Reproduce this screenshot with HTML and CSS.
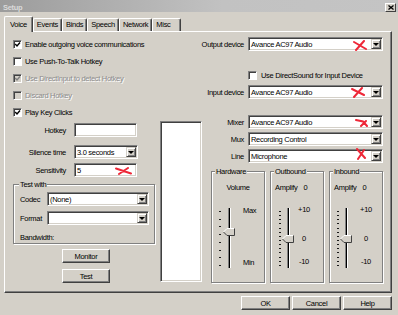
FILE: index.html
```html
<!DOCTYPE html>
<html lang="en">
<head>
    <meta charset="UTF-8">
    <meta name="viewport" content="width=device-width, initial-scale=1.0">
    <title>Setup</title>
    <link rel="stylesheet" href="styles.css">
</head>
<body>
<div class="window">
    <div class="titlebar">
        <span class="title">Setup</span>
        <span class="close"><svg width="6" height="5" viewBox="0 0 6 5"><path d="M0.5 0.5 L5.5 4.5 M5.5 0.5 L0.5 4.5" stroke="#000" stroke-width="1.3"/></svg></span>
    </div>

    <div class="tabs">
        <span class="tab tab-active">Voice</span>
        <span class="tab">Events</span>
        <span class="tab">Binds</span>
        <span class="tab">Speech</span>
        <span class="tab">Network</span>
        <span class="tab tab-last">Misc</span>
    </div>

    <div class="panel">
        <div class="col-left">
            <div class="checks">
                <div class="check"><span class="box"><svg width="7" height="7" viewBox="0 0 7 7"><polyline points="1.2,3 3,5 6,1.5"/></svg></span>Enable outgoing voice communications</div>
                <div class="check"><span class="box"></span>Use Push-To-Talk Hotkey</div>
                <div class="check check-off"><span class="box"><svg width="7" height="7" viewBox="0 0 7 7"><polyline points="1.2,3 3,5 6,1.5"/></svg></span>Use DirectInput to detect Hotkey</div>
                <div class="check check-off"><span class="box"></span>Discard Hotkey</div>
                <div class="check"><span class="box"><svg width="7" height="7" viewBox="0 0 7 7"><polyline points="1.2,3 3,5 6,1.5"/></svg></span>Play Key Clicks</div>
            </div>

            <div class="lower">
                <div class="form">
                    <div class="field field-first">
                        <span class="field-label">Hotkey</span>
                        <span class="input"></span>
                    </div>
                    <div class="field field-silence">
                        <span class="field-label">Silence time</span>
                        <span class="select select-short"><span>3.0 seconds</span><span class="drop"></span></span>
                    </div>
                    <div class="field">
                        <span class="field-label">Sensitivity</span>
                        <span class="input">5
                            <svg class="mark mark-sens" width="17" height="8" viewBox="0 0 17 8"><path d="M1 1.5 L16 6.5 M4 7 L13 1" stroke="#ee2838" stroke-width="2" stroke-linecap="round" fill="none"/></svg>
                        </span>
                    </div>

                    <div class="group group-test">
                        <div class="group-title">Test with</div>
                        <div class="test-row test-first">
                            <span class="test-label">Codec</span>
                            <span class="select select-wide"><span>(None)</span><span class="drop"></span></span>
                        </div>
                        <div class="test-row">
                            <span class="test-label">Format</span>
                            <span class="select select-wide"><span></span><span class="drop"></span></span>
                        </div>
                        <div class="test-note">Bandwidth:</div>
                    </div>

                    <button class="btn btn-form btn-monitor">Monitor</button>
                    <button class="btn btn-form btn-test">Test</button>
                </div>
                <div class="listbox"></div>
            </div>
        </div>

        <div class="col-right">
            <div class="row row-output">
                <span class="row-label">Output device</span>
                <span class="select select-dev"><span>Avance AC97 Audio</span><span class="drop"></span>
                    <svg class="mark mark-out" width="14" height="11" viewBox="0 0 14 11"><path d="M1 2 L13 9 M3 10 L11 1" stroke="#ee2838" stroke-width="2" stroke-linecap="round" fill="none"/></svg>
                </span>
            </div>
            <div class="check check-ds"><span class="box"></span>Use DirectSound for Input Device</div>
            <div class="row row-input">
                <span class="row-label">Input device</span>
                <span class="select select-dev"><span>Avance AC97 Audio</span><span class="drop"></span>
                    <svg class="mark mark-in" width="14" height="11" viewBox="0 0 14 11"><path d="M1 2 L13 8 M3 10 L11 1" stroke="#ee2838" stroke-width="2" stroke-linecap="round" fill="none"/></svg>
                </span>
            </div>
            <div class="row row-mixer">
                <span class="row-label">Mixer</span>
                <span class="select select-dev"><span>Avance AC97 Audio</span><span class="drop"></span>
                    <svg class="mark mark-mix" width="13" height="9" viewBox="0 0 13 9"><path d="M1 2 L8 3.5 L12 8 M6 8 L11 3" stroke="#ee2838" stroke-width="2" stroke-linecap="round" fill="none"/></svg>
                </span>
            </div>
            <div class="row row-next">
                <span class="row-label">Mux</span>
                <span class="select select-dev"><span>Recording Control</span><span class="drop"></span></span>
            </div>
            <div class="row row-next">
                <span class="row-label">Line</span>
                <span class="select select-dev"><span>Microphone</span><span class="drop"></span>
                    <svg class="mark mark-line" width="10" height="12" viewBox="0 0 10 12"><path d="M1 1 L9 10 M2 11 L8 2" stroke="#ee2838" stroke-width="2" stroke-linecap="round" fill="none"/></svg>
                </span>
            </div>

            <div class="groups">
                <div class="group group-slider">
                    <div class="group-title">Hardware</div>
                    <div class="group-head group-head-center">Volume</div>
                    <div class="slider slider-hw">
                        <div class="ticks"><i></i><i></i><i></i><i></i><i></i><i></i><i></i><i></i></div>
                        <div class="track"><svg class="thumb" style="top: 20px" width="12" height="8" viewBox="0 0 12 8"><polygon points="0.5,4 4,0.5 11.5,0.5 11.5,7.5 4,7.5" fill="#d4d0c8"/><polyline points="0.5,4 4,0.5 11,0.5" stroke="#fff" fill="none"/><polyline points="0.5,4 4,7.5 11.5,7.5 11.5,0.5" stroke="#404040" fill="none"/></svg></div>
                        <div class="scale scale-hw"><span>Max</span><span>Min</span></div>
                    </div>
                </div>
                <div class="group group-slider">
                    <div class="group-title">Outbound</div>
                    <div class="group-head"><span>Amplify</span><span>0</span></div>
                    <div class="slider slider-out">
                        <div class="ticks"><i></i><i></i><i></i><i></i><i></i><i></i><i></i><i></i><i></i><i></i><i></i><i></i><i></i><i></i></div>
                        <div class="track"><svg class="thumb" style="top: 27px" width="12" height="8" viewBox="0 0 12 8"><polygon points="0.5,4 4,0.5 11.5,0.5 11.5,7.5 4,7.5" fill="#d4d0c8"/><polyline points="0.5,4 4,0.5 11,0.5" stroke="#fff" fill="none"/><polyline points="0.5,4 4,7.5 11.5,7.5 11.5,0.5" stroke="#404040" fill="none"/></svg></div>
                        <div class="scale scale-amp"><span>+10</span><span>0</span><span>-10</span></div>
                    </div>
                </div>
                <div class="group group-slider">
                    <div class="group-title">Inbound</div>
                    <div class="group-head"><span>Amplify</span><span>0</span></div>
                    <div class="slider slider-in">
                        <div class="ticks"><i></i><i></i><i></i><i></i><i></i><i></i><i></i><i></i><i></i><i></i><i></i><i></i><i></i><i></i></div>
                        <div class="track"><svg class="thumb" style="top: 27px" width="12" height="8" viewBox="0 0 12 8"><polygon points="0.5,4 4,0.5 11.5,0.5 11.5,7.5 4,7.5" fill="#d4d0c8"/><polyline points="0.5,4 4,0.5 11,0.5" stroke="#fff" fill="none"/><polyline points="0.5,4 4,7.5 11.5,7.5 11.5,0.5" stroke="#404040" fill="none"/></svg></div>
                        <div class="scale scale-amp"><span>+10</span><span>0</span><span>-10</span></div>
                    </div>
                </div>
            </div>
        </div>
    </div>

    <div class="actions">
        <button class="btn btn-action">OK</button>
        <button class="btn btn-action">Cancel</button>
        <button class="btn btn-action">Help</button>
    </div>
</div>
</body>
</html>
```

FILE: styles.css
```css
* {
    box-sizing: border-box;
}

body {
    margin: 0;
    background-color: #d4d0c8;
    font-family: "Liberation Sans", Arial, sans-serif;
    font-size: 7.5px;
    letter-spacing: -0.3px;
    line-height: 9px;
    color: #000;
}

.window {
    width: 398px;
    height: 315px;
    overflow: hidden;
    background-color: #d4d0c8;
}

/* title bar */
.titlebar {
    height: 12px;
    display: flex;
    align-items: center;
    justify-content: space-between;
    padding: 2px 2px 0 3px;
    background: linear-gradient(90deg, #9c9c9c, #c2c2c2 56%, #c4c4c4);
}

.title {
    font-weight: bold;
    color: #dadada;
}

.close {
    display: flex;
    align-items: center;
    justify-content: center;
    width: 11px;
    height: 9px;
    background-color: #d4d0c8;
    border: 1px solid;
    border-color: #fff #404040 #404040 #fff;
}

/* tabs */
.tabs {
    display: flex;
    align-items: flex-end;
    height: 19px;
    padding-left: 4px;
}

.tab {
    height: 13px;
    padding: 1px 3px 0;
    border: 1px solid;
    border-color: #fff #404040 transparent #fff;
    border-bottom: none;
    border-radius: 2px 2px 0 0;
    box-shadow: inset -1px 0 #808080;
    white-space: nowrap;
}

.tab-active {
    position: relative;
    z-index: 1;
    height: 16px;
    margin-bottom: -1px;
    padding: 3px 5px 0;
    background-color: #d4d0c8;
}

.tab-last {
    padding-right: 9px;
}

/* panel */
.panel {
    display: flex;
    height: 262px;
    margin: 0 6px 0 4px;
    border: 1px solid;
    border-color: #fff #404040 #404040 #fff;
    box-shadow: inset -1px -1px #808080;
}

.col-left {
    width: 198px;
}

.col-right {
    width: 187px;
}

/* checkboxes */
.checks {
    padding: 4px 0 0 8px;
}

.check {
    display: flex;
    align-items: center;
    height: 17px;
    gap: 3px;
    white-space: nowrap;
}

.box {
    flex: none;
    width: 9px;
    height: 9px;
    background-color: #fff;
    border: 1px solid;
    border-color: #808080 #fff #fff #808080;
    box-shadow: inset 1px 1px #404040;
}

.box svg {
    display: block;
}

.box polyline {
    fill: none;
    stroke: #000;
    stroke-width: 1.4;
}

.check-off {
    color: #8c8c8c;
    text-shadow: 1px 1px 0 #fff;
}

.check-off .box {
    background-color: #d4d0c8;
}

.check-off .box polyline {
    stroke: #808080;
}

.check-ds {
    height: 12px;
    margin-top: 18px;
    padding-left: 45px;
    gap: 4px;
}

/* left form */
.lower {
    display: flex;
}

.form {
    width: 155px;
}

.field {
    display: flex;
    align-items: center;
    margin-top: 4px;
}

.field-first {
    margin-top: 2px;
}

.field-silence {
    margin-top: 8px;
}

.field-label {
    width: 61px;
    margin-right: 8px;
    text-align: right;
    white-space: nowrap;
}

.input,
.select {
    position: relative;
    display: flex;
    align-items: center;
    height: 14px;
    padding-left: 2px;
    background-color: #fff;
    border: 1px solid;
    border-color: #808080 #fff #fff #808080;
    box-shadow: inset 1px 1px #404040, inset -1px -1px #d4d0c8;
    white-space: nowrap;
}

.input {
    width: 63px;
}

.select {
    justify-content: space-between;
}

.select-short {
    width: 64px;
}

.select-wide {
    width: 102px;
}

.select-dev {
    width: 135px;
}

.drop {
    display: flex;
    align-items: center;
    justify-content: center;
    flex: none;
    width: 10px;
    height: 10px;
    margin-right: 1px;
    background-color: #d4d0c8;
    border: 1px solid;
    border-color: #d4d0c8 #404040 #404040 #d4d0c8;
    box-shadow: inset 1px 1px #fff, inset -1px -1px #808080;
}

.drop::after {
    content: "";
    border-top: 3px solid #000;
    border-left: 3px solid transparent;
    border-right: 3px solid transparent;
}

/* red annotation marks */
.mark {
    position: absolute;
}

.mark-out { left: 104px; top: 2px; }
.mark-in { left: 102px; top: 1px; }
.mark-mix { left: 106px; top: 2px; }
.mark-line { left: 107px; top: -2px; }
.mark-sens { left: 40px; top: 3px; }

/* group boxes */
.group {
    border: 1px solid #808080;
    box-shadow: inset 1px 1px #fff, 1px 1px #fff;
}

.group-title {
    width: max-content;
    margin: -5px 0 0 3px;
    padding: 0 1px;
    background-color: #d4d0c8;
}

.group-test {
    width: 142px;
    height: 60px;
    margin: 7px 0 0 8px;
}

.group-test .group-title {
    margin-left: 5px;
}

.test-row {
    display: flex;
    align-items: center;
    margin-top: 5px;
    padding-left: 6px;
}

.test-first {
    margin-top: 3px;
}

.test-label {
    width: 27px;
}

.test-note {
    margin-top: 8px;
    padding-left: 6px;
}

/* buttons */
.btn {
    display: block;
    height: 14px;
    padding: 0;
    font: inherit;
    letter-spacing: inherit;
    color: #000;
    text-align: center;
    background-color: #d4d0c8;
    border: 1px solid;
    border-color: #fff #404040 #404040 #fff;
    box-shadow: inset -1px -1px #808080;
}

.btn-form {
    width: 48px;
    margin-left: 57px;
}

.btn-monitor {
    margin-top: 5px;
}

.btn-test {
    margin-top: 6px;
}

.listbox {
    width: 42px;
    height: 161px;
    background-color: #fff;
    border: 1px solid;
    border-color: #808080 #fff #fff #808080;
    box-shadow: inset 1px 1px #404040, inset -1px -1px #d4d0c8;
}

/* right column */
.row {
    display: flex;
    align-items: center;
}

.row-label {
    display: flex;
    justify-content: flex-end;
    width: 41px;
    margin-right: 4px;
    white-space: nowrap;
}

.row-output {
    margin-top: 5px;
}

.row-input {
    margin-top: 4px;
}

.row-mixer {
    margin-top: 16px;
}

.row-next {
    margin-top: 3px;
}

.groups {
    display: flex;
    gap: 5px;
    margin: 8px 0 0 8px;
}

.group-slider {
    width: 54px;
    height: 112px;
}

.group-head {
    display: flex;
    gap: 6px;
    margin-top: 7px;
    padding-left: 4px;
}

.group-head-center {
    justify-content: center;
    padding-left: 0;
}

/* sliders */
.slider {
    display: flex;
    height: 60px;
    margin-top: 16px;
}

.ticks {
    display: flex;
    flex-direction: column;
    justify-content: space-between;
    width: 2px;
    height: 55px;
    margin-top: 3px;
}

.ticks i {
    display: block;
    height: 1px;
    background-color: #1a1a1a;
}

.track {
    position: relative;
    width: 3px;
    height: 60px;
    margin-left: 6px;
    background-color: #000;
    border-left: 1px solid #808080;
    border-right: 1px solid #fff;
}

.thumb {
    position: absolute;
    left: -6px;
}

.scale {
    display: flex;
    flex-direction: column;
    justify-content: space-between;
    height: 61px;
    margin-top: -3px;
}

.scale-amp {
    width: 14px;
    align-items: center;
}

.scale-amp span:nth-child(2) {
    margin-top: 6px;
}

.slider-hw {
    padding-left: 7px;
}

.slider-hw .track {
    margin-left: 7px;
}

.scale-hw {
    margin-left: 12px;
    margin-top: -2px;
}

.slider-out {
    padding-left: 8px;
}

.slider-out .scale {
    margin-left: 7px;
}

.slider-in {
    padding-left: 7px;
}

.slider-in .scale {
    margin-left: 11px;
}

/* dialog buttons */
.actions {
    display: flex;
    justify-content: flex-end;
    gap: 2px;
    padding: 3px 6px 0 0;
}

.btn-action {
    width: 49px;
}
```
